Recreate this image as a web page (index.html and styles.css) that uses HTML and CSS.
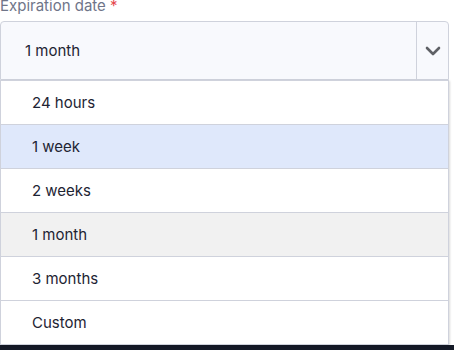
FILE: index.html
```html
<!DOCTYPE html>
<html lang="en">
<head>
    <meta charset="UTF-8">
    <meta name="viewport" content="width=device-width, initial-scale=1.0">
    <title>Expiration date</title>
    <link rel="stylesheet" href="styles.css">
</head>
<body>
    <div class="field">
        <label class="field-label">Expiration date <span class="required">*</span></label>

        <div class="select">
            <div class="select-value">1 month</div>
            <div class="select-toggle">
                <svg width="16" height="10" viewBox="0 0 16 10">
                    <path d="M2 2 L8 8 L14 2" fill="none" stroke="#5f6166" stroke-width="2.6" stroke-linecap="round" stroke-linejoin="round"/>
                </svg>
            </div>
        </div>

        <ul class="options">
            <li class="option">24 hours</li>
            <li class="option hovered">1 week</li>
            <li class="option">2 weeks</li>
            <li class="option selected">1 month</li>
            <li class="option">3 months</li>
            <li class="option">Custom</li>
        </ul>
    </div>

    <div class="footer-bar"></div>
</body>
</html>
```

FILE: styles.css
```css
body {
    margin: 0;
    background-color: #ffffff;
    font-family: Inter, "Noto Sans", sans-serif;
    color: #1e2433;
    width: 454px;
    height: 350px;
    overflow: hidden;
    position: relative;
}
.field {
    width: 449px;
    position: relative;
    z-index: 2;
}
.field-label {
    display: block;
    font-size: 15px;
    line-height: 18px;
    margin-top: -3px;
    height: 24px;
    color: #6f7589;
}
.required {
    color: #e5484d;
}
.select {
    display: flex;
    height: 57px;
    border: 1px solid #cfd2dc;
    border-radius: 4px 4px 0 0;
    background-color: #f8f9fd;
}
.select-value {
    flex: 1;
    display: flex;
    align-items: center;
    padding-left: 24px;
    font-size: 15px;
}
.select-toggle {
    width: 31px;
    border-left: 1px solid #cfd2dc;
    display: flex;
    align-items: center;
    justify-content: center;
}
.options {
    list-style: none;
    margin: 0;
    padding: 0;
    border-left: 1px solid #cfd2dc;
    border-right: 1px solid #cfd2dc;
    background-color: #ffffff;
    box-shadow: 1px 1px 2px rgba(0, 0, 0, 0.15);
}
.option {
    height: 43px;
    border-top: 1px solid #cfd2dc;
    display: flex;
    align-items: center;
    padding-left: 31px;
    font-size: 15px;
}
.option:last-child {
    border-bottom: 1px solid #cfd2dc;
}
.option.hovered {
    background-color: #dfe8fb;
}
.option.selected {
    background-color: #f1f1f1;
}
.footer-bar {
    position: absolute;
    left: 0;
    bottom: 0;
    width: 100%;
    height: 5px;
    background-color: #151a27;
    z-index: 1;
}
```
